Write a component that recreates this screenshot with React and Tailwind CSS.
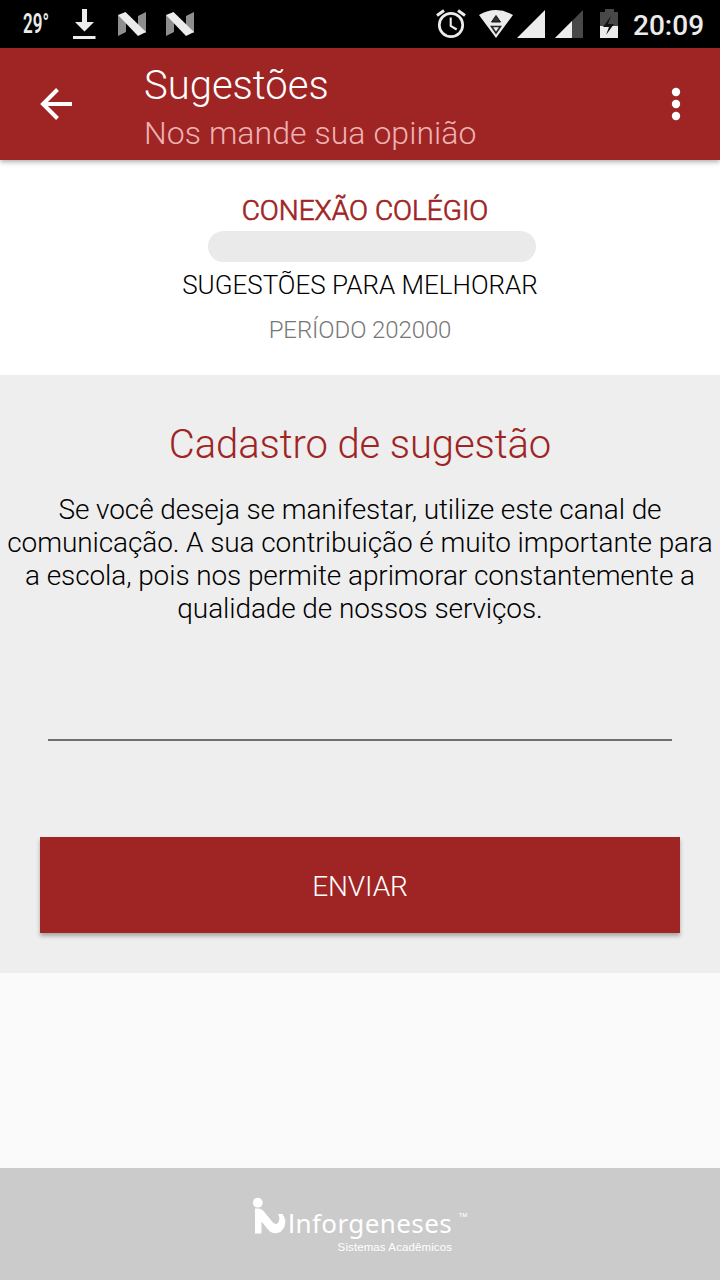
function NougatIcon() {
  return (
    <svg className="h-6 w-7" viewBox="0 0 28 24">
      <path d="M0 3V24L8 20V6ZM20 4L28 0V21L20 18Z" fill="#8e8e8e" />
      <path d="M0 3L7.500 0L28 20L20 24Z" fill="#ececec" />
    </svg>
  );
}

function StatusBar() {
  return (
    <div className="flex h-12 items-start bg-black text-[#ebebeb]">
      <div className="ml-[23px] w-[50px] pt-[8px]">
        <span className="block w-[50px] origin-left scale-x-[.63] text-[27px] leading-8 font-semibold">29°</span>
      </div>
      <svg className="mt-2 h-8 w-[23px]" viewBox="0 0 23 32" fill="#ececec">
        <path d="M9 1h5v13h7l-9.500 9.500L2 14h7zM0 28h22.500v3H0z" />
      </svg>
      <div className="mt-3 ml-[22px] flex gap-5"><NougatIcon /><NougatIcon /></div>
      <svg className="mt-2 ml-[242px] h-8 w-[30px]" viewBox="0 0 30 32" fill="none" stroke="#ececec">
        <circle cx="15" cy="17" r="11.700" strokeWidth="2.700" />
        <path d="M1 7.500L8 2.500M22 2.500l7 5" strokeWidth="3" />
        <path d="M14.700 9.500v8.500l6 3.500" strokeWidth="2.100" />
      </svg>
      <svg className="mt-2 ml-[12px] h-8 w-[36px]" viewBox="0 0 36 32">
        <path d="M1 7Q18-3 35 7L18 30Z" fill="#ececec" />
        <path d="M18 7.500l4.500 6.500h-9z" fill="#333" stroke="#111" />
        <path d="M13.500 18.500h9l-4.500 6.500z" fill="#ececec" stroke="#222" strokeWidth="1.600" />
      </svg>
      <svg className="mt-2 ml-[2px] h-8 w-[30px]" viewBox="0 0 30 32"><path d="M1 30L29 2V30z" fill="#ececec" /></svg>
      <svg className="mt-2 ml-[8px] h-8 w-[30px]" viewBox="0 0 30 32">
        <path d="M1 30L29 2V30z" fill="#484848" /><path d="M1 30L18 13V30z" fill="#ececec" />
      </svg>
      <svg className="mt-2 ml-[15px] h-8 w-5" viewBox="0 0 20 32">
        <path d="M1 4h5V1h9v3h4v14H1z" fill="#484848" /><path d="M1 18h18v12H1z" fill="#ececec" />
        <path d="M12 8L4 19h6L7 27l8-11H9z" fill="#111" />
      </svg>
      <time className="ml-[14px] pt-[10px] text-[28px] leading-8 font-medium">20:09</time>
    </div>
  );
}

function AppBar() {
  return (
    <header className="relative flex h-28 bg-[#9f2424] text-white shadow-[0_2px_5px_rgba(0,0,0,0.32)]">
      <button aria-label="Voltar" className="mt-10 ml-10 h-8 w-8">
        <svg className="h-8 w-8" viewBox="0 0 32 32" fill="none" stroke="white" strokeWidth="4">
          <path d="M32 16H3M17.500 1.500L3 16l14.500 14.500" />
        </svg>
      </button>
      <div className="ml-[72px] w-[400px] pt-[14px] font-light">
        <h1 className="text-[40px] leading-[48px]">Sugestões</h1>
        <p className="-mt-px text-[32px] leading-[48px] tracking-[0.05px] text-[#edb2b2]">Nos mande sua opinião</p>
      </div>
      <button aria-label="Mais opções" className="mt-[39px] ml-[127px] h-[34px] w-[10px]">
        <svg className="h-[34px] w-[10px]" viewBox="0 0 10 34" fill="white">
          <circle cx="5" cy="5" r="4.200" /><circle cx="5" cy="17" r="4.200" /><circle cx="5" cy="29" r="4.200" />
        </svg>
      </button>
    </header>
  );
}

function Brand() {
  return (
    <footer className="flex h-28 bg-[#cbcbcb] pt-[29px] pl-[252px] text-white">
      <svg className="h-[37px] w-[35px]" viewBox="0 0 35 37" fill="white">
        <circle cx="5.800" cy="5.700" r="4.900" />
        <path d="M3 11.500H6.500Q9.500 11.500 11.500 14L20.500 25Q24.500 29 26.500 25Q28.500 21 26 17H30.500Q35 23 32.500 29.500Q29.500 36.300 23.500 36.300Q19 36.300 16 32.500L9.500 24.500V36.500H3Z" />
      </svg>
      <div className="w-[168px] pt-[10px]">
        <p className="pl-[1px] font-['Noto_Sans',sans-serif] text-[26px] leading-8 tracking-[0.4px] whitespace-nowrap">
          <span className="font-[Roboto,sans-serif]">I</span>nforgeneses
        </p>
        <p className="-mt-[1px] flex justify-end pr-[3px] font-['Liberation_Sans',sans-serif] text-[11.500px] leading-4 tracking-[0.1px] whitespace-nowrap">Sistemas Acadêmicos</p>
      </div>
      <span className="ml-[3px] pt-[12px] font-['Liberation_Sans',sans-serif] text-[10px] leading-4">™</span>
    </footer>
  );
}

export default function App() {
  return (
    <div className="flex h-[1280px] w-[720px] flex-col overflow-hidden bg-[#fafafa] font-[Roboto,sans-serif]">
      <StatusBar />
      <AppBar />
      <section className="flex h-[215px] flex-col items-center bg-white pt-[35px] text-center font-light">
        <h2 className="ml-[10px] text-[28px] leading-8 text-[#9f2424] [-webkit-text-stroke:0.7px_#9f2424]">CONEXÃO COLÉGIO</h2>
        <div className="mt-[4px] ml-6 h-[31px] w-[328px] rounded-full bg-[#eaeaea]" />
        <p className="mt-[7px] text-[26px] leading-8 text-black">SUGESTÕES PARA MELHORAR</p>
        <p className="mt-[13px] text-[24px] leading-8 tracking-[-0.1px] text-[#777]">PERÍODO 202000</p>
      </section>
      <main className="flex h-[598px] flex-col bg-[#eee] pt-[46px] text-center font-light">
        <h2 className="text-[40px] leading-[48px] tracking-[-0.1px] text-[#9f2424]">Cadastro de sugestão</h2>
        <p className="mt-[24px] text-[28px] leading-[33px] tracking-[-0.1px] text-black">
          Se você deseja se manifestar, utilize este canal de<br />comunicação. A sua contribuição é muito importante para<br />a escola, pois nos permite aprimorar constantemente a<br />qualidade de nossos serviços.
        </p>
        <input aria-label="Sugestão" className="mx-12 mt-[68px] h-12 border-b-2 border-[#6f6f6f] bg-transparent outline-none" />
        <button className="mx-10 mt-24 h-24 bg-[#9f2424] pt-1 text-[28px] tracking-[-0.1px] text-white shadow-[0_3px_4px_rgba(0,0,0,0.3)]">ENVIAR</button>
      </main>
      <div className="flex-1" />
      <Brand />
    </div>
  );
}
